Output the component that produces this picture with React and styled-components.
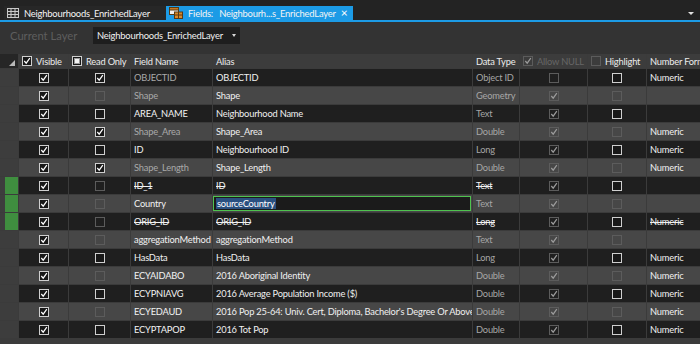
import React from 'react';
import styled, { createGlobalStyle } from 'styled-components';

const GlobalStyle = createGlobalStyle`
  html, body {
    margin: 0;
    padding: 0;
    background: #333333;
    overflow: hidden;
  }
  body {
    font-family: Lato, "Liberation Sans", sans-serif;
    font-size: 9.3px;
    letter-spacing: -0.2px;
    color: #e8e8e8;
  }
`;

const Page = styled.div`
  width: 700px;
  height: 344px;
  display: flex;
  flex-direction: column;
  overflow: hidden;
  background: #333333;
`;

// Document tabs
const TabBar = styled.div`
  height: 20px;
  display: flex;
  align-items: flex-end;
  padding-left: 4px;
  background: #232323;
  border-bottom: 2px solid #1c9be6;
`;

const Tab = styled.div`
  height: 14px;
  display: flex;
  align-items: center;
  gap: 5px;
  padding: 0 6px 0 3px;
  background: ${(p) => (p.$active ? '#1c9be6' : '#272727')};
  color: #f4f4f4;
  font-size: 9.4px;
  letter-spacing: -0.2px;
  white-space: nowrap;
  overflow: hidden;
  width: ${(p) => p.$width}px;
  box-sizing: border-box;
`;

const Icon = styled.span`
  display: inline-flex;
  flex: none;
`;

const TabLabel = styled.span`
  flex: 1;
  word-spacing: ${(p) => (p.$spread ? '4px' : 'normal')};
`;

const Close = styled.span`
  font-size: 12px;
  line-height: 1;
  color: #ffffff;
`;

const TabMenu = styled.div`
  margin-left: auto;
  align-self: center;
  margin-right: 6px;
  width: 0;
  height: 0;
  border-left: 3px solid transparent;
  border-right: 3px solid transparent;
  border-top: 3px solid #e0e0e0;
  margin-top: 6px;
`;

// Layer picker
const Toolbar = styled.div`
  height: 27px;
  display: flex;
  align-items: center;
  padding: 0 10px;
`;

const Label = styled.span`
  width: 83px;
  color: #5e5e5e;
  font-size: 11.2px;
  letter-spacing: 0;
`;

const Select = styled.div`
  width: 147px;
  height: 17px;
  display: flex;
  align-items: center;
  justify-content: space-between;
  padding: 0 4px;
  box-sizing: border-box;
  background: #1e1e1e;
  color: #f0f0f0;
  font-size: 9.4px;
`;

const Caret = styled.span`
  width: 0;
  height: 0;
  border-left: 2px solid transparent;
  border-right: 2px solid transparent;
  border-top: 3px solid #d8d8d8;
`;

// Fields grid
const cols = '18px 49px 61px 81px 259px 46px 67px 58px 80px';

const Table = styled.div`
  margin-top: 5px;
  flex: 1;
  display: flex;
  flex-direction: column;
  gap: 1px;
  background: #3b3b3b;
  width: 727px;
`;

const Row = styled.div`
  display: grid;
  grid-template-columns: ${cols};
  column-gap: 1px;
  height: ${(p) => p.$h}px;
`;

const tones = {
  head: '#3c3c3c',
  dark: '#1f1f1f',
  light: '#474747',
};

const Cell = styled.div`
  display: flex;
  align-items: center;
  justify-content: ${(p) => (p.$center ? 'center' : 'flex-start')};
  gap: 4px;
  padding-left: ${(p) => (p.$center ? 0 : 3)}px;
  background: ${(p) => tones[p.$tone]};
  color: ${(p) => p.$color || '#f0f0f0'};
  text-decoration: ${(p) => (p.$strike ? 'line-through' : 'none')};
  white-space: nowrap;
  overflow: hidden;
  min-width: 0;
`;

const Corner = styled.div`
  background: #262626;
  position: relative;
  &::after {
    content: '';
    position: absolute;
    right: 3px;
    bottom: 2px;
    width: 0;
    height: 0;
    border-left: 6px solid transparent;
    border-bottom: 6px solid #b8b8b8;
  }
`;

const RowHead = styled.div`
  background: ${(p) =>
    p.$changed ? 'linear-gradient(to right, #3d3d3d 5px, #3f8e3f 5px)' : '#3d3d3d'};
`;

const Box = styled.span`
  width: 10px;
  height: 10px;
  box-sizing: border-box;
  border: 1px solid ${(p) => (p.$dim ? '#5c5c5c' : '#cfcfcf')};
  background: ${(p) => (p.$dim ? 'transparent' : '#181818')};
  display: inline-flex;
  align-items: center;
  justify-content: center;
  flex: none;
`;

const Mark = styled.span`
  width: 4px;
  height: 4px;
  background: #f4f4f4;
  border: 1px solid #9a9a9a;
`;

const HeadText = styled.span`
  color: ${(p) => (p.$dim ? '#666666' : '#ececec')};
`;

const EditBox = styled.div`
  margin-left: -3px;
  width: 258px;
  height: 15px;
  box-sizing: border-box;
  border: 1px solid #4fc34f;
  background: #1b1b1b;
  display: flex;
  align-items: center;
  padding-left: 2px;
`;

const Selected = styled.span`
  background: #2a5080;
  color: #ffffff;
  padding: 0 1px;
`;

const Check = ({ on, dim }) => (
  <Box $dim={dim}>
    {on && (
      <svg width="8" height="8" viewBox="0 0 8 8">
        <path d="M1.3 4 L3.2 6.2 L6.8 1.2" fill="none" stroke={dim ? '#9c9c9c' : '#ffffff'} strokeWidth="1.2" />
      </svg>
    )}
  </Box>
);

const TableIcon = () => (
  <Icon>
    <svg width="12" height="10" viewBox="0 0 12 10">
      <rect x="0.5" y="0.5" width="11" height="9" fill="#2e2e2e" stroke="#c9c9c9" />
      <path d="M0.5 3.5 H11.5 M0.5 6.5 H11.5 M4 0.5 V9.5 M8 0.5 V9.5" stroke="#c9c9c9" />
    </svg>
  </Icon>
);

const FieldsIcon = () => (
  <Icon>
    <svg width="14" height="12" viewBox="0 0 14 12">
      <rect x="0.5" y="0.5" width="9" height="7" fill="#f2f2f2" stroke="#5a3a12" />
      <rect x="0.5" y="0.5" width="9" height="2.5" fill="#c77a24" stroke="#5a3a12" />
      <rect x="5.5" y="5" width="8" height="6.5" fill="#d88a2c" stroke="#5a3a12" />
      <path d="M5.5 8 H13.5 M9.5 5 V11.5" stroke="#5a3a12" />
    </svg>
  </Icon>
);

const fields = [
  { name: 'OBJECTID', alias: 'OBJECTID', type: 'Object ID', fmt: 'Numeric', sys: true, ro: true, nul: false },
  { name: 'Shape', alias: 'Shape', type: 'Geometry', sys: true, roDim: true, nul: true },
  { name: 'AREA_NAME', alias: 'Neighbourhood Name', type: 'Text', nul: true },
  { name: 'Shape_Area', alias: 'Shape_Area', type: 'Double', fmt: 'Numeric', sys: true, ro: true, nul: true },
  { name: 'ID', alias: 'Neighbourhood ID', type: 'Long', fmt: 'Numeric', nul: true },
  { name: 'Shape_Length', alias: 'Shape_Length', type: 'Double', fmt: 'Numeric', sys: true, ro: true, nul: true },
  { name: 'ID_1', alias: 'ID', type: 'Text', strike: true, roDim: true, nul: true, changed: true },
  { name: 'Country', alias: 'sourceCountry', type: 'Text', roDim: true, nul: true, changed: true, editing: true },
  { name: 'ORIG_ID', alias: 'ORIG_ID', type: 'Long', fmt: 'Numeric', strike: true, roDim: true, nul: true, changed: true },
  { name: 'aggregationMethod', alias: 'aggregationMethod', type: 'Text', roDim: true, nul: true },
  { name: 'HasData', alias: 'HasData', type: 'Long', fmt: 'Numeric', nul: true },
  { name: 'ECYAIDABO', alias: '2016 Aboriginal Identity', type: 'Double', fmt: 'Numeric', roDim: true, nul: true },
  { name: 'ECYPNIAVG', alias: '2016 Average Population Income ($)', type: 'Double', fmt: 'Numeric', nul: true },
  { name: 'ECYEDAUD', alias: "2016 Pop 25-64: Univ. Cert, Diploma, Bachelor's Degree Or Above", type: 'Double', fmt: 'Numeric', roDim: true, nul: true },
  { name: 'ECYPTAPOP', alias: '2016 Tot Pop', type: 'Double', fmt: 'Numeric', nul: true },
];

const App = () => {
  return (
    <Page>
      <GlobalStyle />
      <TabBar>
        <Tab $width={162}>
          <TableIcon />
          <TabLabel>Neighbourhoods_EnrichedLayer</TabLabel>
        </Tab>
        <Tab $active $width={187}>
          <FieldsIcon />
          <TabLabel $spread>Fields: Neighbourh...s_EnrichedLayer</TabLabel>
          <Close>×</Close>
        </Tab>
        <TabMenu />
      </TabBar>

      <Toolbar>
        <Label>Current Layer</Label>
        <Select>
          Neighbourhoods_EnrichedLayer
          <Caret />
        </Select>
      </Toolbar>

      <Table>
        <Row $h={14}>
          <Corner />
          <Cell $tone="head">
            <Check on />
            <HeadText>Visible</HeadText>
          </Cell>
          <Cell $tone="head">
            <Box><Mark /></Box>
            <HeadText>Read Only</HeadText>
          </Cell>
          <Cell $tone="head"><HeadText>Field Name</HeadText></Cell>
          <Cell $tone="head"><HeadText>Alias</HeadText></Cell>
          <Cell $tone="head"><HeadText>Data Type</HeadText></Cell>
          <Cell $tone="head">
            <Check on dim />
            <HeadText $dim>Allow NULL</HeadText>
          </Cell>
          <Cell $tone="head">
            <Check dim />
            <HeadText>Highlight</HeadText>
          </Cell>
          <Cell $tone="head"><HeadText>Number Format</HeadText></Cell>
        </Row>

        {fields.map((f, i) => {
          const tone = i % 2 === 0 ? 'dark' : 'light';
          const light = tone === 'light';
          return (
            <Row $h={17} key={f.name}>
              <RowHead $changed={f.changed} />
              <Cell $tone={tone} $center>
                <Check on dim={false} />
              </Cell>
              <Cell $tone={tone} $center>
                <Check on={f.ro} dim={f.roDim} />
              </Cell>
              <Cell $tone={tone} $color={f.sys ? '#a9a9a9' : '#f2f2f2'} $strike={f.strike}>
                {f.name}
              </Cell>
              <Cell $tone={tone} $strike={f.strike}>
                {f.editing ? (
                  <EditBox>
                    <Selected>{f.alias}</Selected>
                  </EditBox>
                ) : (
                  f.alias
                )}
              </Cell>
              <Cell $tone={tone} $color={f.strike ? '#f2f2f2' : '#a6a6a6'} $strike={f.strike}>
                {f.type}
              </Cell>
              <Cell $tone={tone} $center>
                <Check on={f.nul} dim />
              </Cell>
              <Cell $tone={tone} $center>
                <Check dim={light} />
              </Cell>
              <Cell $tone={tone} $strike={f.strike}>
                {f.fmt}
              </Cell>
            </Row>
          );
        })}
      </Table>
    </Page>
  );
};

export default App;
